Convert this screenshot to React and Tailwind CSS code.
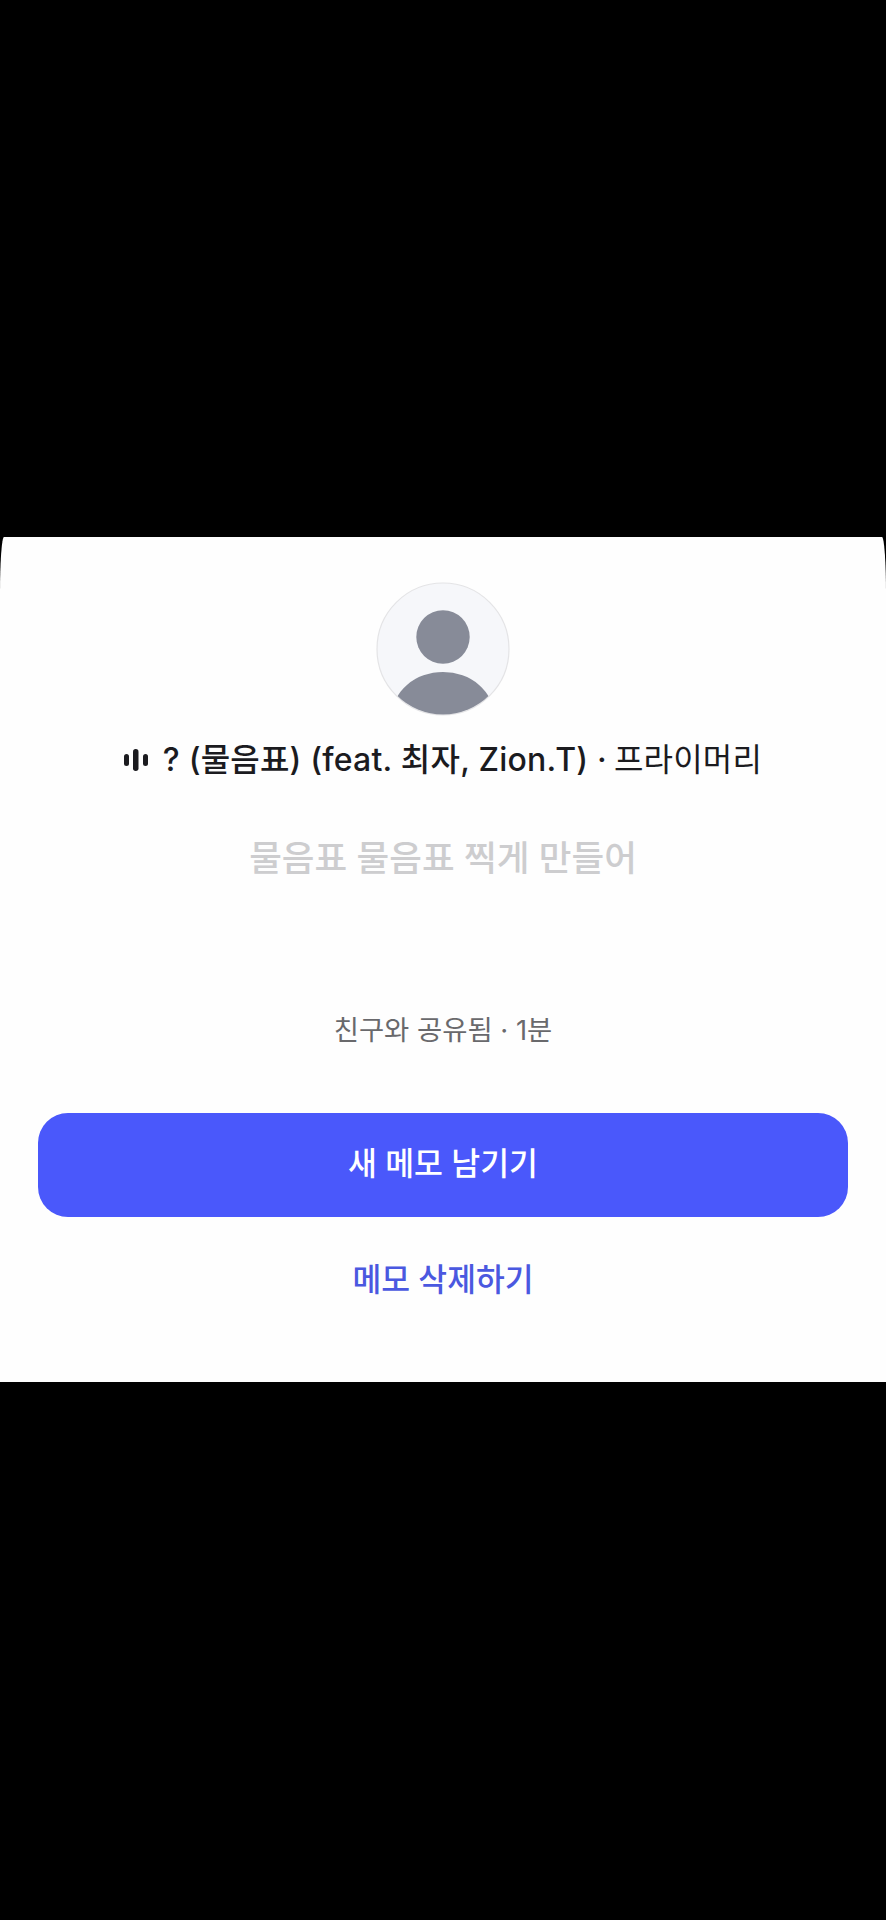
import React from 'react';

const FONT = "font-['Inter','Noto_Sans_CJK_KR',sans-serif]";

const Avatar = () => (
  <svg className="block w-[134px] h-[134px]" viewBox="0 0 134 134">
    <defs>
      <clipPath id="avatar-clip">
        <circle cx="67" cy="67" r="65.5" />
      </clipPath>
    </defs>
    <circle cx="67" cy="67" r="66" fill="#f6f7fa" stroke="#e4e4e6" strokeWidth="1.2" />
    <g clipPath="url(#avatar-clip)" fill="#878b98">
      <circle cx="67" cy="55" r="26.7" />
      <ellipse cx="67" cy="134" rx="51" ry="44" />
    </g>
  </svg>
);

// small equalizer mark in front of the song title
const SoundBars = () => (
  <svg className="w-[24px] h-[22px] shrink-0" viewBox="0 0 24 22" fill="#1b1b1f">
    <rect x="0" y="5" width="5" height="12" rx="2.5" />
    <rect x="9" y="0" width="5.5" height="22" rx="2.7" />
    <rect x="19" y="5" width="5" height="12" rx="2.5" />
  </svg>
);

export default function App() {
  return (
    <div className={`min-h-[1920px] bg-black pt-[537px] ${FONT}`}>
      <div className="h-[845px] bg-[#fefefe] rounded-t-[4px_56px] flex flex-col items-center pt-[45px]">
        <Avatar />

        <div className="mt-[23px] h-[42px] flex items-center text-[32px] tracking-[0.2px] text-[#1b1b1f]">
          <SoundBars />
          <span className="ml-[15px] font-medium">? (물음표) (feat. 최자, Zion.T) ·</span>
          <span className="ml-[7px] font-normal">프라이머리</span>
        </div>

        <p className="mt-[50px] h-[56px] leading-[56px] text-[35.5px] font-medium text-[#cdcdcf]">
          물음표 물음표 찍게 만들어
        </p>

        <p className="mt-[123px] h-[40px] leading-[40px] text-[27.4px] font-normal text-[#69696c]">
          친구와 공유됨 · 1분
        </p>

        <button className="mt-[63px] w-[810px] h-[104px] rounded-[30px] bg-[#4a58fb] text-white text-[31.4px] font-medium">
          새 메모 남기기
        </button>

        <button className="mt-[40px] h-[42px] text-[31.3px] font-medium text-[#4a58e0]">
          메모 삭제하기
        </button>
      </div>
    </div>
  );
}
